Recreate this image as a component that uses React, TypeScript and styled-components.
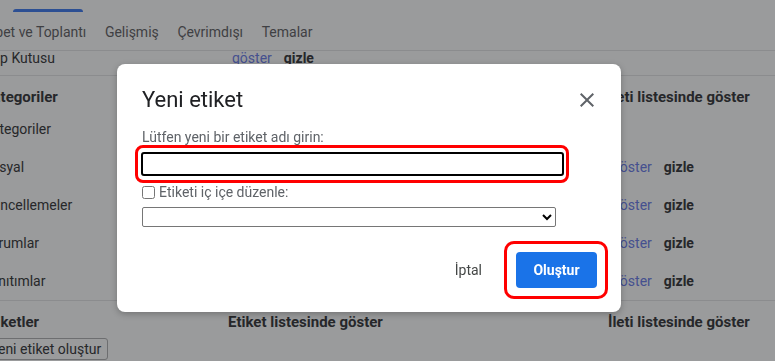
import React from "react";
import styled, { createGlobalStyle } from "styled-components";

const GlobalStyle = createGlobalStyle`
  html, body {
    margin: 0;
    padding: 0;
    background: #9a9b9c;
    font-family: Roboto, "Noto Sans", Arial, sans-serif;
    overflow: hidden;
  }
  * { box-sizing: border-box; }
`;

// ---------- background settings page (dimmed behind the modal) ----------

const Page = styled.div`
  width: 775px;
  height: 361px;
  overflow: hidden;
  color: #27282a;
  font-size: 14px;
`;

const TopTabs = styled.div`
  height: 12px;
  display: flex;
  align-items: flex-end;
  padding-left: 13px;
`;

const Indicator = styled.div`
  width: 70px;
  height: 3px;
  border-radius: 3px 3px 0 0;
  background: #2c4f93;
`;

const TabRow = styled.div`
  height: 39px;
  display: flex;
  align-items: center;
  margin-left: -38px;
  padding-top: 1px;
  border-bottom: 1px solid #8b8c8e;
`;

const Tab = styled.div`
  padding: 0 9.3px;
  color: #3f4043;
  font-size: 14px;
  white-space: nowrap;
`;

const Table = styled.div`
  margin-left: -17px;
`;

const Row = styled.div<{ $height?: number; $top?: boolean }>`
  display: grid;
  grid-template-columns: 245px 380px 1fr;
  align-items: ${(p) => (p.$top ? "start" : "center")};
  height: ${(p) => p.$height ?? 38}px;
  line-height: 14px;
`;

const Divider = styled.div`
  height: 1px;
  background: #8b8c8e;
`;

const SectionHead = styled.div`
  display: grid;
  grid-template-columns: 245px 380px 1fr;
  padding: 11px 0 3px;
  line-height: 20px;
  font-size: 15px;
  font-weight: 700;
  color: #26272a;
`;

const Cell = styled.div`
  white-space: nowrap;
`;

const Actions = styled.div`
  display: flex;
  gap: 12px;
  padding-left: 4px;
`;

const Link = styled.span`
  color: #45508f;
`;

const Bold = styled.span`
  font-weight: 700;
  color: #26272a;
`;

const PageButton = styled.button`
  margin-top: 3px;
  height: 22px;
  padding: 0 6px;
  border: 1px solid #6d6e70;
  border-radius: 3px;
  background: transparent;
  color: #26272a;
  font-family: inherit;
  font-size: 14px;
`;

// ---------- modal ----------

const Layer = styled.div`
  position: fixed;
  inset: 0;
`;

const Dialog = styled.div`
  position: absolute;
  left: 117px;
  top: 64px;
  width: 504px;
  height: 248px;
  background: #fff;
  border-radius: 8px;
  box-shadow: 0 2px 6px rgba(0, 0, 0, 0.25);
  padding: 22px 13px 13px 25px;
  display: flex;
  flex-direction: column;
`;

const Header = styled.div`
  display: flex;
  align-items: center;
  justify-content: space-between;
  padding-right: 9px;
`;

const Title = styled.h2`
  margin: 0;
  font-size: 22px;
  line-height: 28px;
  font-weight: 400;
  color: #202124;
`;

const CloseButton = styled.button`
  width: 24px;
  height: 24px;
  padding: 0;
  border: none;
  background: none;
  color: #5f6368;
  display: flex;
  align-items: center;
  justify-content: center;
  margin-top: -1px;
`;

const FieldLabel = styled.label`
  display: block;
  margin-top: 15px;
  font-size: 14px;
  line-height: 16px;
  color: #5f6368;
`;

const Highlight = styled.div`
  border: 3px solid #ff0000;
  border-radius: 8px;
`;

const InputRing = styled(Highlight)`
  width: 434px;
  margin-left: -7px;
  padding: 4px 2px 4px 3px;
`;

const NameInput = styled.input`
  display: block;
  width: 100%;
  height: 24px;
  border: 2px solid #000;
  border-radius: 3px;
  outline: none;
  font-family: inherit;
  font-size: 14px;
`;

const CheckRow = styled.label`
  display: flex;
  align-items: center;
  margin-top: 1px;
  height: 16px;
  font-size: 14px;
  color: #5f6368;
`;

const Check = styled.input`
  width: 13px;
  height: 13px;
  margin: 0 4px 0 0;
`;

const ParentSelect = styled.select`
  margin-top: 7px;
  width: 414px;
  height: 20px;
  border: 1px solid #767676;
  border-radius: 2px;
  background: #fff;
  font-size: 13px;
`;

const Footer = styled.div`
  margin-top: auto;
  display: flex;
  align-items: center;
  justify-content: flex-end;
  gap: 14px;
`;

const TextButton = styled.button`
  padding: 0 8px;
  height: 36px;
  border: none;
  background: none;
  color: #444746;
  font-family: inherit;
  font-size: 14px;
`;

const ButtonRing = styled(Highlight)`
  border-radius: 10px;
  padding: 8px 8px 8px 9px;
`;

const PrimaryButton = styled.button`
  display: block;
  width: 81px;
  height: 36px;
  border: none;
  border-radius: 4px;
  background: #1a73e8;
  color: #fff;
  font-family: inherit;
  font-size: 14px;
  font-weight: 700;
`;

const categories = ["Kategoriler", "Sosyal", "Güncellemeler", "Forumlar", "Tanıtımlar"];

export default function App() {
  return (
    <>
      <GlobalStyle />
      <Page>
        <TopTabs>
          <Indicator />
        </TopTabs>
        <TabRow>
          <Tab>Sohbet ve Toplantı</Tab>
          <Tab>Gelişmiş</Tab>
          <Tab>Çevrimdışı</Tab>
          <Tab>Temalar</Tab>
        </TabRow>
        <Table>
          <Row $height={24} $top>
            <Cell>Çöp Kutusu</Cell>
            <Actions>
              <Link>göster</Link>
              <Bold>gizle</Bold>
            </Actions>
            <Cell />
          </Row>
          <Divider />
          <SectionHead>
            <Cell>Kategoriler</Cell>
            <Cell />
            <Cell>İleti listesinde göster</Cell>
          </SectionHead>
          {categories.map((c, i) => (
            <Row key={c}>
              <Cell>{c}</Cell>
              <Cell />
              {i > 0 ? (
                <Actions>
                  <Link>göster</Link>
                  <Bold>gizle</Bold>
                </Actions>
              ) : (
                <Cell />
              )}
            </Row>
          ))}
          <Divider />
          <SectionHead>
            <Cell>Etiketler</Cell>
            <Cell>Etiket listesinde göster</Cell>
            <Cell>İleti listesinde göster</Cell>
          </SectionHead>
          <PageButton>Yeni etiket oluştur</PageButton>
        </Table>
      </Page>

      <Layer>
        <Dialog role="dialog">
          <Header>
            <Title>Yeni etiket</Title>
            <CloseButton aria-label="Kapat">
              <svg width="24" height="24" viewBox="0 0 24 24" fill="currentColor">
                <path d="M19 6.41 17.59 5 12 10.59 6.41 5 5 6.41 10.59 12 5 17.59 6.41 19 12 13.41 17.59 19 19 17.59 13.41 12z" />
              </svg>
            </CloseButton>
          </Header>
          <FieldLabel>Lütfen yeni bir etiket adı girin:</FieldLabel>
          <InputRing>
            <NameInput />
          </InputRing>
          <CheckRow>
            <Check type="checkbox" />
            Etiketi iç içe düzenle:
          </CheckRow>
          <ParentSelect>
            <option></option>
          </ParentSelect>
          <Footer>
            <TextButton>İptal</TextButton>
            <ButtonRing>
              <PrimaryButton>Oluştur</PrimaryButton>
            </ButtonRing>
          </Footer>
        </Dialog>
      </Layer>
    </>
  );
}
